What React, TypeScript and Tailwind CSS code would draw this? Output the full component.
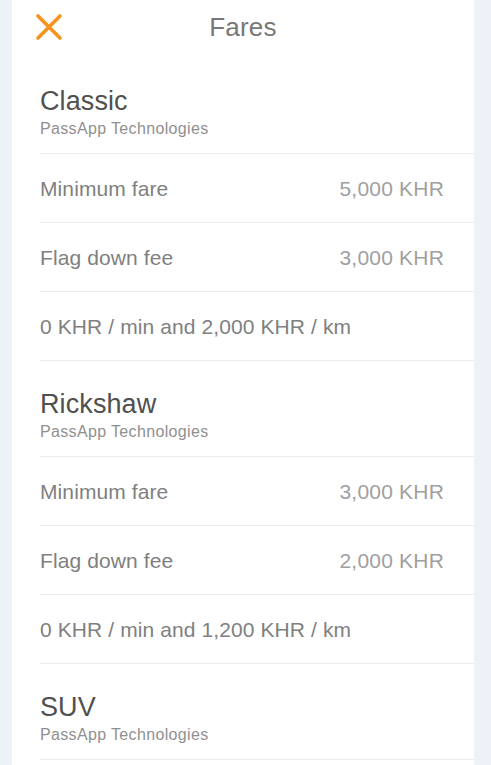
import React from "react";

type Row = { label: string; value?: string };
type Section = { name: string; company: string; rows: Row[] };

const sections: Section[] = [
  {
    name: "Classic",
    company: "PassApp Technologies",
    rows: [
      { label: "Minimum fare", value: "5,000 KHR" },
      { label: "Flag down fee", value: "3,000 KHR" },
      { label: "0 KHR / min and 2,000 KHR / km" },
    ],
  },
  {
    name: "Rickshaw",
    company: "PassApp Technologies",
    rows: [
      { label: "Minimum fare", value: "3,000 KHR" },
      { label: "Flag down fee", value: "2,000 KHR" },
      { label: "0 KHR / min and 1,200 KHR / km" },
    ],
  },
  {
    name: "SUV",
    company: "PassApp Technologies",
    rows: [],
  },
];

export default function App() {
  return (
    <div
      className="w-[491px] h-[765px] overflow-hidden bg-[#edf1f8] flex"
      style={{ fontFamily: '"Liberation Sans", Arial, sans-serif' }}
    >
      <div className="ml-[12px] w-[462px] bg-white flex flex-col">
        <div className="h-[58px] grid grid-cols-[1fr_auto_1fr] items-start pt-[11px]">
          <div className="pl-[23px] pt-[2px]">
            <svg width="28" height="28" viewBox="0 0 28 28">
              <path
                d="M3 3 L25 25 M25 3 L3 25"
                stroke="#f7931d"
                strokeWidth="3.6"
                strokeLinecap="round"
                fill="none"
              />
            </svg>
          </div>
          <div className="text-[26px] leading-[32px] tracking-[0.2px] text-[#777777]">Fares</div>
          <div />
        </div>
        <div className="pl-[28px] flex flex-col">
          {sections.map((s) => (
            <div key={s.name} className="flex flex-col">
              <div className="h-[96px] border-b border-[#ebebeb] pt-[27px] flex flex-col">
                <div className="text-[27px] leading-[32px] tracking-[0.1px] text-[#505050]">{s.name}</div>
                <div className="text-[16px] leading-[20px] mt-[2px] tracking-[0.35px] text-[#909090]">
                  {s.company}
                </div>
              </div>
              {s.rows.map((r, i) => (
                <div
                  key={i}
                  className="h-[69px] border-b border-[#ebebeb] flex items-center justify-between pr-[30px] pt-[2px]"
                >
                  <span className="text-[21px] tracking-[0.1px] text-[#808080]">{r.label}</span>
                  {r.value && (
                    <span className="text-[21px] tracking-[0.2px] text-[#a0a0a0]">{r.value}</span>
                  )}
                </div>
              ))}
            </div>
          ))}
        </div>
      </div>
    </div>
  );
}
